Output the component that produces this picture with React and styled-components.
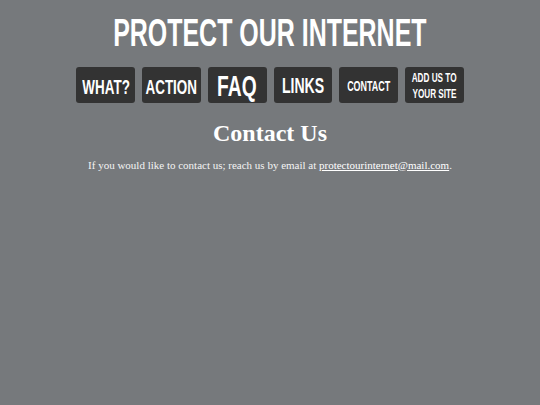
import React from "react";
import styled, { createGlobalStyle } from "styled-components";

const GlobalStyle = createGlobalStyle`
  html, body {
    margin: 0;
    padding: 0;
    background: #76797c;
  }
`;

// condensed look: no narrow font installed, so the labels are squeezed with scaleX
const navItems = [
  { label: "WHAT?", size: 21 },
  { label: "ACTION", size: 21 },
  { label: "FAQ", size: 30 },
  { label: "LINKS", size: 22 },
  { label: "CONTACT", size: 14 },
  { label: "ADD US TO YOUR SITE", size: 12.8, lines: ["ADD US TO", "YOUR SITE"] },
];

const App = () => {
  return (
    <Page>
      <GlobalStyle />
      <Title>
        <Squeeze>PROTECT OUR INTERNET</Squeeze>
      </Title>
      <Nav>
        {navItems.map((item) => (
          <NavButton key={item.label} $size={item.size}>
            {item.lines ? (
              <Stack>
                {item.lines.map((l) => (
                  <Squeeze key={l}>{l}</Squeeze>
                ))}
              </Stack>
            ) : (
              <Squeeze>{item.label}</Squeeze>
            )}
          </NavButton>
        ))}
      </Nav>
      <Heading>Contact Us</Heading>
      <Text>
        If you would like to contact us; reach us by email at{" "}
        <Mail href="#">protectourinternet@mail.com</Mail>.
      </Text>
    </Page>
  );
};

export default App;

const Page = styled.div`
  width: 540px;
  height: 405px;
  background: #76797c;
  display: flex;
  flex-direction: column;
  align-items: center;
  padding-top: 13px;
  box-sizing: border-box;
  overflow: hidden;
`;

const Squeeze = styled.span`
  display: inline-block;
  transform: scaleX(0.64);
  transform-origin: center;
  white-space: nowrap;
`;

const Title = styled.h1`
  margin: 0;
  font-family: "Liberation Sans", Arial, sans-serif;
  font-weight: bold;
  font-size: 39px;
  line-height: 39px;
  color: #ffffff;
`;

const Nav = styled.nav`
  display: flex;
  gap: 7px;
  margin-top: 15px;
`;

const NavButton = styled.div`
  width: 58.7px;
  height: 36px;
  box-sizing: border-box;
  padding-top: 2px;
  background: #333333;
  border-radius: 3px;
  display: flex;
  align-items: center;
  justify-content: center;
  color: #ffffff;
  font-family: "Liberation Sans", Arial, sans-serif;
  font-weight: bold;
  font-size: ${(p) => p.$size}px;
  line-height: 1;
`;

const Stack = styled.div`
  display: flex;
  flex-direction: column;
  align-items: center;
  line-height: 16px;
`;

const Heading = styled.h2`
  margin: 17.5px 0 0;
  font-family: "Liberation Serif", "Times New Roman", serif;
  font-weight: bold;
  font-size: 24px;
  line-height: 24px;
  color: #ffffff;
`;

const Text = styled.p`
  margin: 14px 0 0;
  font-family: "Liberation Serif", "Times New Roman", serif;
  font-size: 11px;
  line-height: 13px;
  color: #f4f4f4;
`;

const Mail = styled.a`
  color: #ffffff;
  text-decoration: underline;
`;
